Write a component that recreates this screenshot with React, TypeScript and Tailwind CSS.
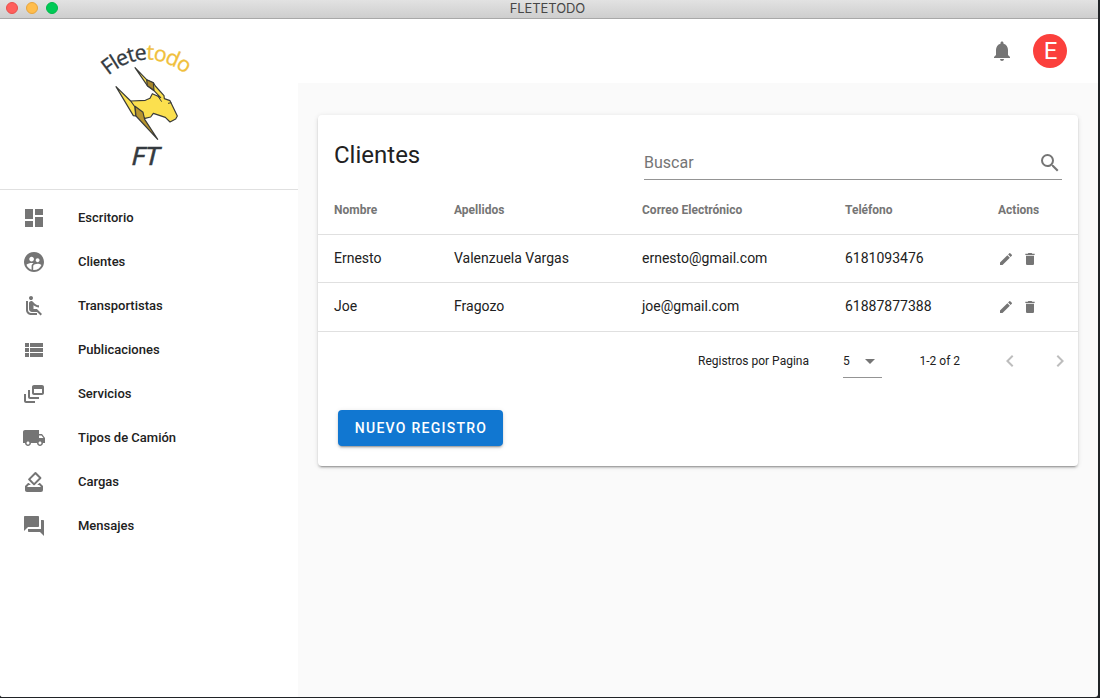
import type { ReactNode } from "react";
import {
  MdAirlineSeatReclineNormal,
  MdArrowDropDown,
  MdChevronLeft,
  MdChevronRight,
  MdDashboard,
  MdDelete,
  MdDynamicFeed,
  MdEdit,
  MdForum,
  MdHowToVote,
  MdLocalShipping,
  MdNotifications,
  MdSearch,
  MdSupervisedUserCircle,
  MdViewList,
} from "react-icons/md";

const menu: { label: string; icon: ReactNode }[] = [
  { label: "Escritorio", icon: <MdDashboard /> },
  { label: "Clientes", icon: <MdSupervisedUserCircle /> },
  { label: "Transportistas", icon: <MdAirlineSeatReclineNormal /> },
  { label: "Publicaciones", icon: <MdViewList /> },
  { label: "Servicios", icon: <MdDynamicFeed /> },
  { label: "Tipos de Camión", icon: <MdLocalShipping /> },
  { label: "Cargas", icon: <MdHowToVote /> },
  { label: "Mensajes", icon: <MdForum /> },
];

const clients = [
  { name: "Ernesto", last: "Valenzuela Vargas", mail: "ernesto@gmail.com", phone: "6181093476" },
  { name: "Joe", last: "Fragozo", mail: "joe@gmail.com", phone: "61887877388" },
];

function Logo() {
  return (
    <svg viewBox="0 0 360 420" className="h-[140px] w-[120px]">
      <defs>
        <path id="arc" d="M55 122 C130 58 215 56 300 128" />
      </defs>
      <text fontFamily="'Open Sans', sans-serif" fontSize="64" letterSpacing="-3.6" fill="#343a40" stroke="#343a40" strokeWidth="1">
        <textPath href="#arc">
          Flete<tspan fill="#f0c03c" stroke="#f0c03c">todo</tspan>
        </textPath>
      </text>
      <g stroke="#3a3b38" strokeWidth="3.5" strokeLinejoin="round">
        <path fill="#fbe04e" d="M122 198L166 196L180 190L187 176L204 184L212 188L192 167L172 152L135 98L170 134L190 143L196 153L222 182L223 191L240 197L262 243L257 252L240 261L226 247L208 241L190 235L182 246L165 250L140 235Z" />
        <path fill="#a9872a" d="M170 134L190 143L192 166L172 152Z" />
        <path fill="#fbe04e" d="M78 155L122 198L135 216L137 243L130 242Z" />
        <path fill="#b8952d" d="M135 214L159 232L164 253L203 313L138 243Z" />
        <path fill="none" strokeWidth="3" d="M204 184L215 200M234 205L244 203" />
      </g>
      <text x="124" y="389" fontFamily="'Open Sans', sans-serif" fontStyle="italic" fontSize="79" textLength="84" lengthAdjust="spacingAndGlyphs" fill="#343a40" stroke="#343a40" strokeWidth="1.5">
        FT
      </text>
    </svg>
  );
}

function Sidebar() {
  return (
    <aside className="flex w-[298px] shrink-0 flex-col bg-white">
      <div className="flex h-[171px] shrink-0 border-b border-[#e0e0e0] pt-4 pl-[90px]">
        <Logo />
      </div>
      <nav className="flex flex-col pt-1.5">
        {menu.map((m) => (
          <a key={m.label} className="flex h-11 items-center gap-8 pl-[22px]">
            <span className="text-2xl text-[#757575]">{m.icon}</span>
            <span className="text-[13px] font-medium">{m.label}</span>
          </a>
        ))}
      </nav>
    </aside>
  );
}

const cols = "grid grid-cols-[120px_188px_203px_153px_96px] items-center border-b border-[#e0e0e0] *:px-4";

function ClientsCard() {
  return (
    <section className="h-[351px] w-[760px] rounded bg-white shadow-[0_3px_1px_-2px_rgba(0,0,0,0.2),0_2px_2px_0_rgba(0,0,0,0.14),0_1px_5px_0_rgba(0,0,0,0.12)]">
      <div className="flex h-[71px] justify-between px-4">
        <h1 className="pt-6 text-2xl leading-8">Clientes</h1>
        <div className="mt-[31px] flex h-[34px] w-[418px] items-center justify-between border-b border-[#949494] text-[#757575]">
          <span className="text-base">Buscar</span>
          <MdSearch className="text-2xl" />
        </div>
      </div>
      <div className={`${cols} h-[49px] text-xs font-bold text-[#757575]`}>
        <span>Nombre</span>
        <span>Apellidos</span>
        <span>Correo Electrónico</span>
        <span>Teléfono</span>
        <span>Actions</span>
      </div>
      {clients.map((c) => (
        <div key={c.name} className={`${cols} h-12 text-sm nth-4:h-[49px]`}>
          <span className="pb-0.5">{c.name}</span>
          <span className="pb-0.5">{c.last}</span>
          <span className="pb-0.5">{c.mail}</span>
          <span className="pb-0.5">{c.phone}</span>
          <span className="flex gap-2 text-base text-[#757575]">
            <MdEdit />
            <MdDelete />
          </span>
        </div>
      ))}
      <div className="flex h-[58px] items-center pl-[380px] text-xs">
        <span className="w-[145px]">Registros por Pagina</span>
        <span className="mt-0.5 flex h-8 w-[39px] items-center justify-between border-b border-[#949494] pb-px">
          5<MdArrowDropDown className="text-2xl text-[#757575]" />
        </span>
        <span className="ml-[37.5px] w-[78.5px]">1-2 of 2</span>
        <MdChevronLeft className="text-2xl text-[#bdbdbd]" />
        <MdChevronRight className="ml-[26px] text-2xl text-[#bdbdbd]" />
      </div>
      <button className="mt-5 ml-5 flex h-9 w-[165px] items-center justify-center rounded bg-[#1177d1] pl-px text-sm font-medium tracking-[1.25px] text-white shadow-[0_3px_1px_-2px_rgba(0,0,0,0.2),0_2px_2px_0_rgba(0,0,0,0.14),0_1px_5px_0_rgba(0,0,0,0.12)]">
        NUEVO REGISTRO
      </button>
    </section>
  );
}

export default function App() {
  return (
    <div className="h-[698px] w-[1100px] overflow-hidden bg-[#202326] font-['Roboto',sans-serif] text-[#212121]">
      <div className="flex h-[697px] w-[1098px] flex-col overflow-hidden rounded-b-[3px] bg-[#fafafa]">
        <header className="grid h-[19px] shrink-0 grid-cols-3 items-center border-b border-[#a8a8a8] bg-linear-to-b from-[#e2e2e2] to-[#cecece]">
          <div className="-mt-0.5 flex gap-2 pl-1.5">
            <i className="size-3 rounded-full border border-[#e8504c] bg-[#ff5f5c]" />
            <i className="size-3 rounded-full border border-[#e6a53e] bg-[#ffbd4c]" />
            <i className="size-3 rounded-full border border-[#00b84a] bg-[#00ca56]" />
          </div>
          <span className="-mt-0.5 pr-[3px] text-center font-['Inter',sans-serif] text-[13px] leading-4 tracking-[-0.1px] text-[#474747]">FLETETODO</span>
        </header>
        <div className="flex min-h-0 flex-1">
          <Sidebar />
          <main className="flex flex-1 flex-col">
            <div className="flex h-16 items-center justify-end gap-[19px] bg-white pr-[31px]">
              <MdNotifications className="text-2xl text-[#757575]" />
              <span className="flex size-[34px] items-center justify-center rounded-full bg-[#fb403c] pl-px text-2xl text-white">E</span>
            </div>
            <div className="px-5 pt-8">
              <ClientsCard />
            </div>
          </main>
        </div>
      </div>
    </div>
  );
}
